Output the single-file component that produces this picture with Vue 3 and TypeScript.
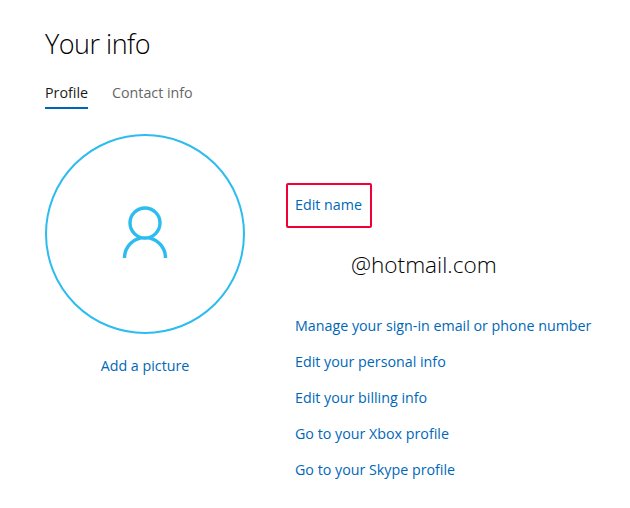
<script setup lang="ts">
const links: string[] = [
  'Manage your sign-in email or phone number',
  'Edit your personal info',
  'Edit your billing info',
  'Go to your Xbox profile',
  'Go to your Skype profile',
]
</script>

<template>
  <main class="page">
    <h1 class="title">Your info</h1>
    <nav class="tabs">
      <a class="tab active">Profile</a>
      <a class="tab">Contact info</a>
    </nav>
    <section class="content">
      <div class="picture">
        <div class="circle">
          <svg width="46" height="56" viewBox="0 0 46 56" fill="none" stroke="#2cbcf0" stroke-width="3.4">
            <path d="M2.5 52 A20.5 20.5 0 0 1 43.5 52" />
            <circle cx="23" cy="17" r="15" fill="#fff" />
          </svg>
        </div>
        <a class="link add">Add a picture</a>
      </div>
      <div class="details">
        <div class="name-box"><a class="link">Edit name</a></div>
        <p class="email">@hotmail.com</p>
        <ul class="links">
          <li v-for="l in links" :key="l"><a class="link">{{ l }}</a></li>
        </ul>
      </div>
    </section>
  </main>
</template>

<style>
html, body { margin: 0; background: #fff; }
</style>

<style scoped>
.page {
  width: 630px;
  height: 508px;
  box-sizing: border-box;
  padding: 26px 0 0 45px;
  font-family: "Open Sans", "Noto Sans", sans-serif;
  font-size: 14.27px;
  overflow: hidden;
}
.title {
  margin: 0;
  font-size: 27px;
  line-height: 36px;
  font-weight: 300;
  letter-spacing: -0.5px;
  color: #000;
}
.tabs {
  display: flex;
  gap: 24px;
  margin-top: 20px;
}
.tab {
  color: #666;
  line-height: 22px;
  padding-bottom: 3px;
  border-bottom: 2px solid transparent;
}
.tab.active {
  color: #1a1a1a;
  border-bottom-color: #0067b8;
}
.content {
  display: flex;
  margin-top: 25px;
}
.picture {
  width: 200px;
  display: flex;
  flex-direction: column;
  align-items: center;
}
.circle {
  width: 200px;
  height: 200px;
  box-sizing: border-box;
  border: 2px solid #2cbcf0;
  border-radius: 50%;
  display: flex;
  align-items: center;
  justify-content: center;
}
.add {
  margin-top: 21px;
}
.link {
  color: #0067b8;
  line-height: 22px;
}
.details {
  margin-left: 41px;
  padding-top: 49px;
}
.name-box {
  width: 86px;
  height: 45px;
  box-sizing: border-box;
  border: 2px solid #f00034;
  border-radius: 2px;
  padding: 0 0 2px 7px;
  display: flex;
  align-items: center;
}
.email {
  margin: 20px 0 0 65px;
  font-size: 22.6px;
  line-height: 34px;
  font-weight: 300;
  color: #000;
}
.links {
  list-style: none;
  margin: 33px 0 0 9px;
  padding: 0;
  display: flex;
  flex-direction: column;
  gap: 14px;
}
.links li {
  line-height: 22px;
  white-space: nowrap;
}
</style>
